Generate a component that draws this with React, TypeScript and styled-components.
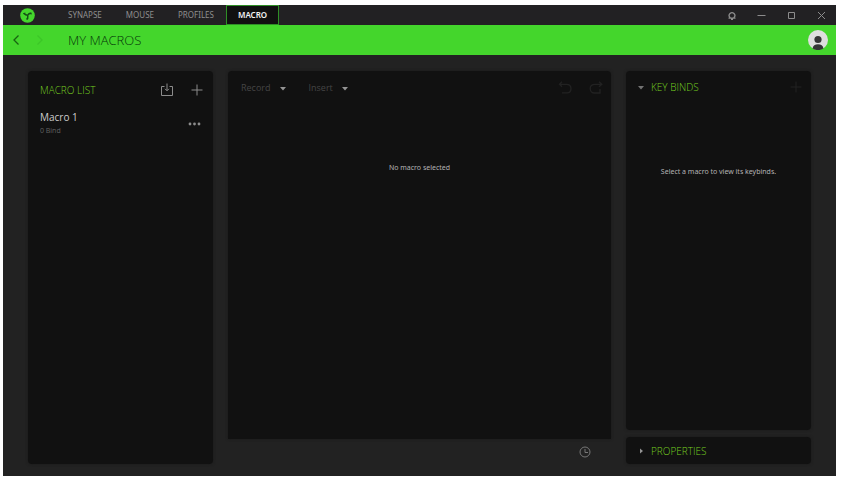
import React from 'react';
import styled, { createGlobalStyle } from 'styled-components';

const GlobalStyle = createGlobalStyle`
  * { box-sizing: border-box; }
  body { margin: 0; background: #fff; font-family: "Open Sans", "Noto Sans", sans-serif; }
  button { font: inherit; color: inherit; }
  h1, h2, h3, p { margin: 0; font-weight: 400; }
  svg { display: block; }
`;

const Page = styled.div`
  min-height: 100vh;
  padding: 5px 7px 8px 3px;
  display: flex;
`;

const Window = styled.div`
  flex: 1;
  min-width: 0;
  display: flex;
  flex-direction: column;
  background: #222222;
`;

const TitleBar = styled.header`
  display: flex;
  align-items: stretch;
  height: 20px;
  background: #222123;
`;

const Brand = styled.div`
  width: 53px;
  padding-left: 17px;
  display: flex;
  align-items: center;
`;

const Tabs = styled.nav`
  display: flex;
  flex: 1;
`;

const Tab = styled.a<{ $active?: boolean }>`
  display: flex;
  align-items: center;
  border: solid #2f8f26;
  border-width: ${p => (p.$active ? '1px' : '0')};
  padding: 0 ${p => (p.$active ? '11px' : '12px')};
  background: ${p => (p.$active ? '#101010' : 'transparent')};
  color: ${p => (p.$active ? '#f2f2f2' : '#8e8e8e')};
  font-family: "Noto Sans", sans-serif;
  font-size: 8px;
  font-weight: ${p => (p.$active ? 600 : 400)};
  line-height: 12px;
  text-decoration: none;
`;

const IconButton = styled.button<{ $color?: string }>`
  display: flex;
  align-items: center;
  justify-content: center;
  padding: 0;
  border: 0;
  background: none;
  color: ${p => p.$color ?? '#8c8c8c'};
`;

const WindowControls = styled.div`
  display: grid;
  grid-template-columns: repeat(4, 30px);
`;

const PageBar = styled.div`
  display: flex;
  align-items: center;
  height: 30px;
  padding: 0 8px 0 9px;
  background: #44d62c;
`;

const History = styled.div`
  display: flex;
  gap: 16px;
  width: 56px;
`;

const PageTitle = styled.h1`
  flex: 1;
  color: #07370a;
  font-family: "Open Sans", sans-serif;
  font-size: 13px;
  font-weight: 300;
  line-height: 18px;
`;

const Workspace = styled.main`
  flex: 1;
  display: grid;
  grid-template-columns: 185fr 383fr 185fr;
  column-gap: 15px;
  padding: 16px 25px 12px;
`;

const Column = styled.div`
  display: flex;
  flex-direction: column;
  min-width: 0;
`;

const Panel = styled.section<{ $fill?: boolean; $flat?: boolean }>`
  flex: ${p => (p.$fill ? '1' : 'none')};
  border-radius: ${p => (p.$flat ? '4px 4px 0 0' : '4px')};
  background: #111111;
  box-shadow: 0 0 3px #171717;
`;

const ListHeader = styled.div`
  display: flex;
  align-items: center;
  gap: 17px;
  height: 37px;
  padding: 0 10px 0 12px;
`;

const PanelTitle = styled.h2`
  flex: 1;
  color: #74cc20;
  font-size: 10px;
  font-weight: 300;
  line-height: 14px;
`;

const MacroRow = styled.div`
  display: flex;
  align-items: center;
  height: 32px;
  padding: 0 12px;
`;

const MacroInfo = styled.div`
  flex: 1;
`;

const MacroName = styled.h3`
  color: #cccccc;
  font-size: 10px;
  line-height: 14px;
`;

const MacroMeta = styled.p`
  color: #626262;
  font-size: 7px;
  line-height: 14px;
`;

const Toolbar = styled.div`
  display: flex;
  align-items: center;
  gap: 22px;
  height: 34px;
  padding: 0 8px 0 13px;
`;

const MenuButton = styled.button`
  display: flex;
  align-items: center;
  gap: 8px;
  padding: 0;
  border: 0;
  background: none;
  color: #454545;
  font-size: 9px;
  line-height: 14px;
`;

const ToolbarActions = styled.div`
  display: flex;
  gap: 17px;
  margin-left: auto;
`;

const EmptyText = styled.p<{ $side?: boolean }>`
  padding-top: ${p => (p.$side ? '63px' : '57px')};
  color: #b4b4b4;
  font-family: "Noto Sans", sans-serif;
  font-size: 7px;
  line-height: 12px;
  text-align: center;
`;

const Status = styled.footer`
  display: flex;
  justify-content: flex-end;
  align-items: center;
  height: 25px;
  padding-right: 20px;
`;

const SideColumn = styled(Column)`
  gap: 7px;
`;

const SideHeader = styled.div<{ $compact?: boolean }>`
  display: flex;
  align-items: center;
  height: ${p => (p.$compact ? '27px' : '32px')};
  padding: 0 9px 0 11px;
`;

const Disclosure = styled.button`
  display: flex;
  align-items: center;
  flex: 1;
  gap: 6px;
  padding: 0;
  border: 0;
  background: none;
  text-align: left;
`;

const User = styled(IconButton)`
  border-radius: 50%;
`;

const Caret = ({ right = false, color = '#949494' }: { right?: boolean; color?: string }) => (
  <svg width="8" height="8" viewBox="0 0 8 8" fill={color} aria-hidden="true">
    <path d={right ? 'M3 1.500L6 4L3 6.500Z' : 'M1 3h6L4 6.500Z'} />
  </svg>
);

const Plus = ({ size }: { size: number }) => (
  <svg width={size} height={size} viewBox="0 0 12 12" fill="none" stroke="currentColor">
    <path d="M6 .5v11M.5 6h11" />
  </svg>
);

const Chevron = ({ right = false }: { right?: boolean }) => (
  <svg width="8" height="12" viewBox="0 0 8 12" fill="none" stroke="currentColor" strokeWidth="1.3">
    <path d={right ? 'M1.500 1.500L6 6L1.500 10.500' : 'M6.500 1.500L2 6L6.500 10.500'} />
  </svg>
);

const Undo = () => (
  <svg width="14" height="14" viewBox="0 0 14 14" fill="none" stroke="currentColor" strokeWidth="1.3">
    <path d="M4 .8L1.500 3.300L4 5.800M1.500 3.300h7c2.800 0 4.500 1.700 4.500 4.200s-1.700 4.300-4 4.300H4" />
  </svg>
);

const Redo = () => (
  <svg width="14" height="14" viewBox="0 0 14 14" fill="none" stroke="currentColor" strokeWidth="1.3">
    <path d="M10 .8l2.800 2.500L10 5.800M12.800 3.300H6C3 3.300 1.200 5 1.200 7.500S3 12 5.500 12H11V8" />
  </svg>
);

const Logo = () => (
  <svg width="15" height="15" viewBox="0 0 15 15" role="img" aria-label="Synapse">
    <circle cx="7.5" cy="7.500" r="7.300" fill="#44d62c" />
    <g fill="none" stroke="#144d16" strokeLinecap="round">
      <path d="M7.600 7.300C6.200 7.300 4.900 6.600 4 5.600M7.600 7.300C8.300 6 9.500 5.300 11 5.300M7.600 7.300C8.100 8.600 7.900 9.900 7.200 11" strokeWidth="1.500" />
      <path d="M3.700 5.500l1.400-.3M10.500 5l.6 1.200M6.700 10.900l1.300-.2" strokeWidth=".8" />
    </g>
  </svg>
);

const tabs = ['SYNAPSE', 'MOUSE', 'PROFILES', 'MACRO'];

export default function App() {
  return (
    <>
      <GlobalStyle />
      <Page>
        <Window>
          <TitleBar>
            <Brand><Logo /></Brand>
            <Tabs>
              {tabs.map(name => (
                <Tab key={name} href={`#${name.toLowerCase()}`} $active={name === 'MACRO'}>{name}</Tab>
              ))}
            </Tabs>
            <WindowControls>
              <IconButton aria-label="Notifications">
                <svg width="11" height="9" viewBox="0 0 11 9" fill="none" stroke="currentColor" strokeWidth="1.3">
                  <path d="M4 6.700V6.500A2.800 2.800 0 118 6.500V7M2.500 7.200H9.500M5 8.300h2" />
                </svg>
              </IconButton>
              <IconButton aria-label="Minimize">
                <svg width="9" height="9" viewBox="0 0 9 9" stroke="currentColor"><path d="M.5 4.500h8" /></svg>
              </IconButton>
              <IconButton aria-label="Maximize">
                <svg width="9" height="9" viewBox="0 0 9 9" fill="none" stroke="currentColor"><path d="M1.500 1.500h6v6h-6Z" /></svg>
              </IconButton>
              <IconButton aria-label="Close">
                <svg width="9" height="9" viewBox="0 0 9 9" stroke="currentColor"><path d="M1 1l7 7M8 1L1 8" /></svg>
              </IconButton>
            </WindowControls>
          </TitleBar>

          <PageBar>
            <History>
              <IconButton $color="#176311" aria-label="Back"><Chevron /></IconButton>
              <IconButton $color="#3cc628" aria-label="Forward" disabled><Chevron right /></IconButton>
            </History>
            <PageTitle>MY MACROS</PageTitle>
            <User aria-label="Account">
              <svg width="20" height="20" viewBox="0 0 20 20">
                <circle cx="10" cy="10" r="10" fill="#dedede" />
                <circle cx="10" cy="9.500" r="3.600" fill="#353535" />
                <path d="M4.600 18.400C5 15.500 7 14.300 10 14.300s5 1.200 5.400 4.100A10 10 0 014.600 18.400Z" fill="#353535" />
              </svg>
            </User>
          </PageBar>

          <Workspace>
            <Column>
              <Panel $fill>
                <ListHeader>
                  <PanelTitle>MACRO LIST</PanelTitle>
                  <IconButton aria-label="Import macro">
                    <svg width="14" height="14" viewBox="0 0 14 14" fill="none" stroke="currentColor">
                      <path d="M4.500 3.500h-3v9h11v-9h-3M7 .5v7M5 5.800L7 7.800l2-2" />
                    </svg>
                  </IconButton>
                  <IconButton aria-label="Add macro"><Plus size={12} /></IconButton>
                </ListHeader>
                <MacroRow>
                  <MacroInfo>
                    <MacroName>Macro 1</MacroName>
                    <MacroMeta>0 Bind</MacroMeta>
                  </MacroInfo>
                  <IconButton aria-label="Macro options">
                    <svg width="13" height="4" viewBox="0 0 13 4" fill="currentColor">
                      <circle cx="2" cy="2" r="1.400" /><circle cx="6.500" cy="2" r="1.400" /><circle cx="11" cy="2" r="1.400" />
                    </svg>
                  </IconButton>
                </MacroRow>
              </Panel>
            </Column>

            <Column>
              <Panel $fill $flat>
                <Toolbar>
                  <MenuButton>Record <Caret /></MenuButton>
                  <MenuButton>Insert <Caret /></MenuButton>
                  <ToolbarActions>
                    <IconButton $color="#222222" aria-label="Undo" disabled><Undo /></IconButton>
                    <IconButton $color="#222222" aria-label="Redo" disabled><Redo /></IconButton>
                  </ToolbarActions>
                </Toolbar>
                <EmptyText>No macro selected</EmptyText>
              </Panel>
              <Status>
                <IconButton $color="#777777" aria-label="Delay settings">
                  <svg width="12" height="12" viewBox="0 0 12 12" fill="none" stroke="currentColor">
                    <circle cx="6" cy="6" r="5" /><path d="M6 3v3.500h3" />
                  </svg>
                </IconButton>
              </Status>
            </Column>

            <SideColumn>
              <Panel $fill>
                <SideHeader>
                  <Disclosure aria-expanded="true">
                    <Caret color="#737373" />
                    <PanelTitle as="span">KEY BINDS</PanelTitle>
                  </Disclosure>
                  <IconButton $color="#232323" aria-label="Add key bind" disabled><Plus size={12} /></IconButton>
                </SideHeader>
                <EmptyText $side>Select a macro to view its keybinds.</EmptyText>
              </Panel>
              <Panel>
                <SideHeader $compact>
                  <Disclosure aria-expanded="false">
                    <Caret right />
                    <PanelTitle as="span">PROPERTIES</PanelTitle>
                  </Disclosure>
                </SideHeader>
              </Panel>
            </SideColumn>
          </Workspace>
        </Window>
      </Page>
    </>
  );
}
